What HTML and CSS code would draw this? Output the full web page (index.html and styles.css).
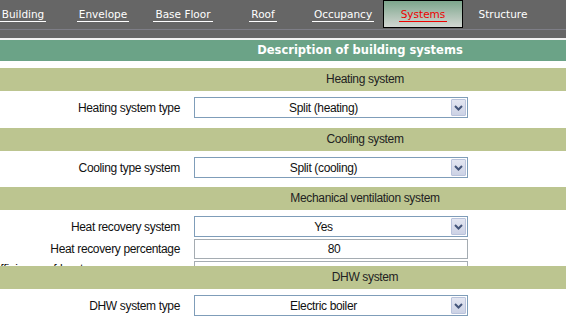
FILE: index.html
```html
<!DOCTYPE html>
<html lang="en">
<head>
<meta charset="utf-8">
<title>Description of building systems</title>
<link rel="stylesheet" href="styles.css">
</head>
<body>
<div class="page">
  <nav class="tabs">
    <div class="tab"><span class="tab-label">Building</span></div>
    <div class="tab"><span class="tab-label">Envelope</span></div>
    <div class="tab"><span class="tab-label">Base Floor</span></div>
    <div class="tab"><span class="tab-label">Roof</span></div>
    <div class="tab"><span class="tab-label">Occupancy</span></div>
    <div class="tab tab-active"><span class="tab-label">Systems</span></div>
    <div class="tab"><span class="tab-label tab-label-plain">Structure</span></div>
  </nav>
  <div class="tabs-rule"></div>
  <div class="tabs-foot"></div>
  <div class="title">Description of building systems</div>

  <section class="sec sec-first">
    <div class="sec-head">Heating system</div>
    <div class="sec-body">
      <div class="row">
        <label class="row-label">Heating system type</label>
        <div class="select"><span class="select-text">Split (heating)</span><span class="select-btn"><svg width="9" height="6" viewBox="0 0 9 6"><path d="M1 1 L4.5 4.5 L8 1" fill="none" stroke="#44557a" stroke-width="2"/></svg></span></div>
      </div>
    </div>
  </section>

  <section class="sec sec-cooling">
    <div class="sec-head">Cooling system</div>
    <div class="sec-body">
      <div class="row">
        <label class="row-label">Cooling type system</label>
        <div class="select"><span class="select-text">Split (cooling)</span><span class="select-btn"><svg width="9" height="6" viewBox="0 0 9 6"><path d="M1 1 L4.5 4.5 L8 1" fill="none" stroke="#44557a" stroke-width="2"/></svg></span></div>
      </div>
    </div>
  </section>

  <section class="sec sec-mech">
    <div class="sec-head">Mechanical ventilation system</div>
    <div class="sec-body">
      <div class="row">
        <label class="row-label">Heat recovery system</label>
        <div class="select"><span class="select-text">Yes</span><span class="select-btn"><svg width="9" height="6" viewBox="0 0 9 6"><path d="M1 1 L4.5 4.5 L8 1" fill="none" stroke="#44557a" stroke-width="2"/></svg></span></div>
      </div>
      <div class="row">
        <label class="row-label">Heat recovery percentage</label>
        <div class="input">80</div>
      </div>
      <div class="row">
        <label class="row-label row-label-top">Efficiency of heat recovery per year</label>
        <div class="input"></div>
      </div>
    </div>
  </section>

  <section class="sec">
    <div class="sec-head">DHW system</div>
    <div class="sec-body">
      <div class="row">
        <label class="row-label">DHW system type</label>
        <div class="select"><span class="select-text">Electric boiler</span><span class="select-btn"><svg width="9" height="6" viewBox="0 0 9 6"><path d="M1 1 L4.5 4.5 L8 1" fill="none" stroke="#44557a" stroke-width="2"/></svg></span></div>
      </div>
    </div>
  </section>
</div>
</body>
</html>
```

FILE: styles.css
```css
html, body {
  margin: 0;
  padding: 0;
  overflow: hidden;
  background: #ffffff;
}

.page {
  width: 730px;
  font-family: "Liberation Sans", Arial, sans-serif;
  font-size: 12px;
  letter-spacing: -0.35px;
  color: #111111;
}

/* ---- tab bar ---- */
.tabs {
  display: flex;
  align-items: flex-start;
  height: 29px;
  background: #666666;
  margin-left: -17px;
}

.tab {
  box-sizing: border-box;
  flex: 0 0 80px;
  height: 28px;
  padding-top: 7px;
  text-align: center;
  font-family: "DejaVu Sans", Verdana, sans-serif;
  font-size: 10.5px;
  letter-spacing: 0;
  color: #ffffff;
}

.tab-label {
  display: inline-block;
  line-height: 14px;
  padding: 0 2px;
  border-bottom: 1px solid #ffffff;
}

.tab-label-plain {
  border-bottom-color: transparent;
}

.tab-active {
  padding-top: 6px;
  border: 1px solid #000000;
  background: linear-gradient(to bottom, #7ca68c 0%, #a9bfb0 50%, #d2d6d2 100%);
  color: #ee0000;
}

.tab-active .tab-label {
  border-bottom-color: #ee0000;
}

.tabs-rule {
  height: 1px;
  background: #7d7d86;
}

.tabs-foot {
  height: 8px;
  background: #666666;
  border-bottom: 2px solid #f2f2f2;
}

.title {
  height: 21px;
  line-height: 21px;
  padding-right: 10px;
  background: #6ba387;
  color: #ffffff;
  text-align: center;
  font-family: "DejaVu Sans", Verdana, sans-serif;
  font-weight: bold;
  font-size: 11.5px;
  letter-spacing: 0;
}

/* ---- sections ---- */
.sec-first {
  margin-top: 7px;
}

.sec-head {
  height: 23px;
  line-height: 23px;
  background: #bcc590;
  color: #222222;
  text-align: center;
}

.sec-body {
  padding: 6px 0 10px;
  display: flex;
  flex-direction: column;
  gap: 2px;
}

.sec-cooling .sec-body {
  padding-bottom: 9px;
}

.sec-mech .sec-body {
  box-sizing: border-box;
  height: 56px;
  padding-bottom: 0;
  overflow: hidden;
}

.row {
  display: grid;
  grid-template-columns: 180px 274px;
  column-gap: 14px;
  align-items: center;
}

.row-label {
  display: flex;
  justify-content: flex-end;
  white-space: nowrap;
  color: #111111;
}

.row-label-top {
  align-self: start;
  line-height: 17px;
  letter-spacing: 0;
}

.select {
  box-sizing: border-box;
  height: 21px;
  display: flex;
  align-items: center;
  border: 1px solid #7f9db9;
  background: #ffffff;
  padding: 1px;
}

.select-text {
  flex: 1;
  text-align: center;
  color: #111111;
}

.select-btn {
  box-sizing: border-box;
  flex: 0 0 15px;
  height: 17px;
  display: flex;
  align-items: center;
  justify-content: center;
  border: 1px solid #b9c3dc;
  border-radius: 1px;
  background: linear-gradient(to bottom, #e3e6f1 0%, #ccd2e5 100%);
}

.input {
  box-sizing: border-box;
  height: 20px;
  line-height: 18px;
  border: 1px solid #a5acb2;
  text-align: center;
  padding-left: 6px;
  color: #111111;
}
```
